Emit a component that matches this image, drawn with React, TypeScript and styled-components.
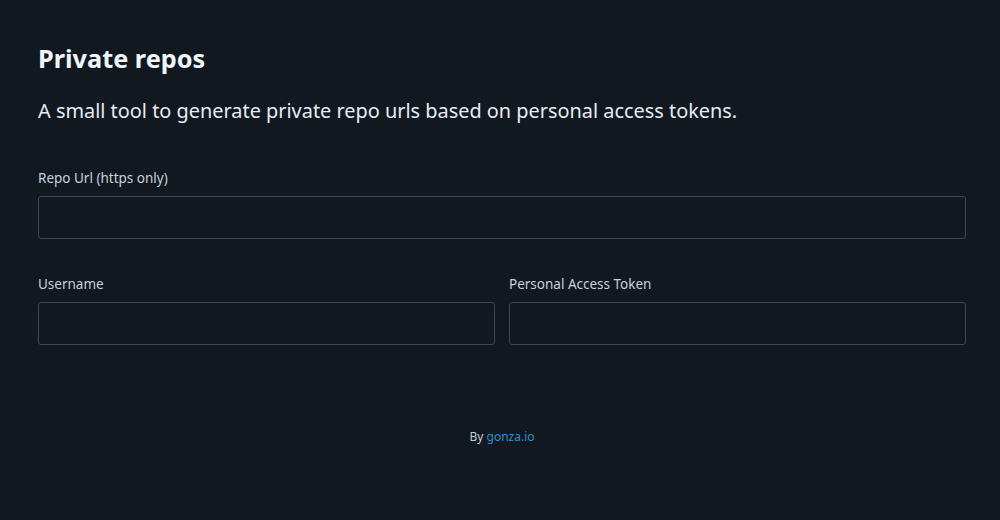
import React from 'react'
import styled, { createGlobalStyle } from 'styled-components';

const GlobalStyle = createGlobalStyle`
  html, body {
    margin: 0;
    padding: 0;
    background: #111820;
    font-family: "Noto Sans", "Open Sans", sans-serif;
  }
`;

const Page = styled.div`
  box-sizing: border-box;
  min-height: 520px;
  padding: 41px 34px 0 38px;
  color: #f0f6fc;
`;

const Title = styled.h1`
  margin: 0;
  font-size: 25.3px;
  line-height: 34px;
  font-weight: 700;
  color: #f0f6fc;
`;

const Subtitle = styled.p`
  margin: 22px 0 0;
  font-size: 19.9px;
  line-height: 28px;
  font-weight: 400;
  color: #e6edf3;
`;

const Form = styled.div`
  margin-top: 44px;
  display: flex;
  flex-direction: column;
  gap: 36px;
`;

const Row = styled.div`
  display: grid;
  grid-template-columns: 1fr 1fr;
  gap: 14px;
`;

const Field = styled.label`
  display: flex;
  flex-direction: column;
  gap: 9px;
`;

const Label = styled.span`
  font-size: 13.5px;
  line-height: 18px;
  color: #c9d1d9;
`;

const Input = styled.input`
  box-sizing: border-box;
  height: 43px;
  width: 100%;
  background: #111820;
  border: 1px solid #3d4855;
  border-radius: 3px;
  color: #e6edf3;
  padding: 0 10px;
  font: inherit;
  outline: none;
`;

const Footer = styled.footer`
  margin-top: 83px;
  text-align: center;
  font-size: 12px;
  color: #c9d1d9;

  a {
    color: #2a91d6;
    text-decoration: none;
  }
`;

function App() {
  return (
    <>
      <GlobalStyle />
      <Page>
        <Title>Private repos</Title>
        <Subtitle>A small tool to generate private repo urls based on personal access tokens.</Subtitle>
        <Form>
          <Field>
            <Label>Repo Url (https only)</Label>
            <Input type="text" />
          </Field>
          <Row>
            <Field>
              <Label>Username</Label>
              <Input type="text" />
            </Field>
            <Field>
              <Label>Personal Access Token</Label>
              <Input type="text" />
            </Field>
          </Row>
        </Form>
        <Footer>
          By <a href="#">gonza.io</a>
        </Footer>
      </Page>
    </>
  )
}

export default App
